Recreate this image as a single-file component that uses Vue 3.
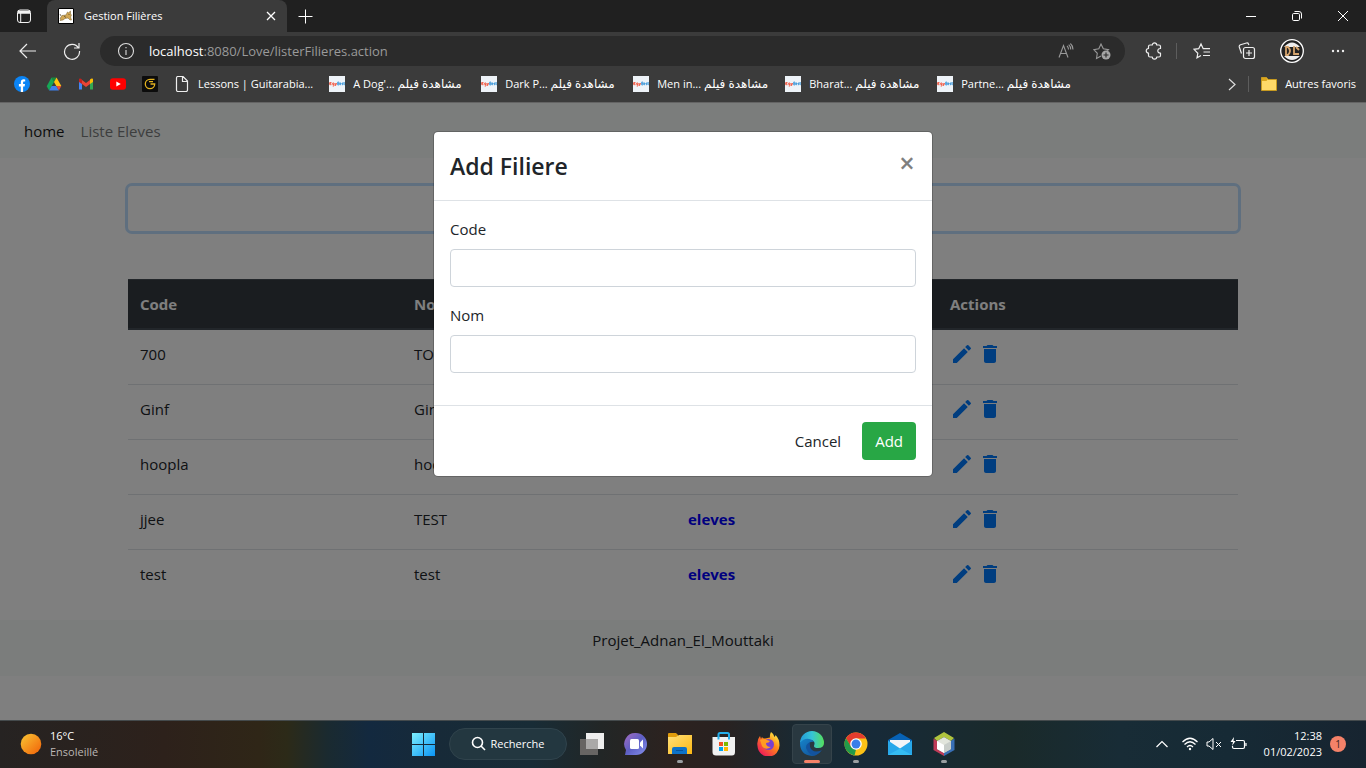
<script setup>
import { ref } from 'vue'

const code = ref('')
const nom = ref('')
const search = ref('')

const filieres = [
  { code: '700', nom: 'TOTO' },
  { code: 'Ginf', nom: 'Ginf' },
  { code: 'hoopla', nom: 'hoopla' },
  { code: 'jjee', nom: 'TEST' },
  { code: 'test', nom: 'test' },
]

const films = ["A Dog'...", 'Dark P...', 'Men in...', 'Bharat...', 'Partne...']
</script>

<template>
  <div class="screen">
    <header class="tabs">
      <button class="tab-menu" aria-label="Onglets">
        <svg width="16" height="16" viewBox="0 0 16 16" fill="none" stroke="#f2f2f2"><rect x="1.5" y="2" width="13" height="12.5" rx="2.5" /><path d="M2 3.5h12M2 5h12" stroke-width="1.6" /><path d="M4.7 5v9" /></svg>
      </button>
      <div class="tab">
        <svg width="16" height="16" viewBox="0 0 16 16"><path fill="#fff" stroke="#000" d="M.5.5h15v15H.5z" /><path d="M2 10.500l2-3 4-.5 1.500-3 1 .8L12.500 3v3l1 1-1 2 1 3h-1.500l-2-2-3 .5-2 1.500-3 .5 1-1.500z" fill="#d1a754" stroke="#715826" stroke-width=".5" /><path d="M2 6l1 2M6 8l2 1.500M10.500 6.500h1" stroke="#4b3d20" stroke-width=".7" /></svg>
        <span class="tab-title">Gestion Filières</span>
        <button aria-label="Fermer l'onglet"><svg width="10" height="10" viewBox="0 0 10 10" stroke="#fff" stroke-width="1.3"><path d="M1 1l8 8M9 1L1 9" /></svg></button>
      </div>
      <button class="tab-new" aria-label="Nouvel onglet"><svg width="15" height="15" viewBox="0 0 15 15" stroke="#fff"><path d="M7.5.5v14M.5 7.5h14" /></svg></button>
      <div class="window-controls">
        <button aria-label="Réduire"><svg width="10" height="10" viewBox="0 0 10 10" stroke="#fff"><path d="M0 5.5h10" /></svg></button>
        <button aria-label="Restaurer"><svg width="10" height="10" viewBox="0 0 10 10" fill="none" stroke="#fff"><rect x=".5" y="2.5" width="7" height="7" rx="1.2" /><path d="M2.5.5H7A2.5 2.5 0 0 1 9.500 3v4.500" /></svg></button>
        <button aria-label="Fermer"><svg width="10" height="10" viewBox="0 0 10 10" stroke="#fff"><path d="M0 0l10 10M10 0L0 10" /></svg></button>
      </div>
    </header>

    <div class="toolbar">
      <button class="nav-btn" aria-label="Retour"><svg width="18" height="16" viewBox="0 0 18 16" fill="none" stroke="#eee" stroke-width="1.2"><path d="M17 8H1.500M8 1L1 8l7 7" /></svg></button>
      <button class="nav-btn" aria-label="Actualiser"><svg width="18" height="18" viewBox="0 0 18 18" fill="none" stroke="#eee" stroke-width="1.2"><path d="M15.500 6A7.500 7.500 0 1 0 16.500 9M16 1v5h-5" /></svg></button>
      <div class="address">
        <svg width="18" height="18" viewBox="0 0 18 18" fill="none" stroke="#ddd" stroke-width="1.100"><circle cx="9" cy="9" r="7.500" /><path d="M9 8v5M9 5v1.300" /></svg>
        <span class="url"><b>localhost</b>:8080/Love/listerFilieres.action</span>
        <button aria-label="Lecture à voix haute"><svg width="18" height="18" viewBox="0 0 18 18" fill="none" stroke="#999" stroke-width="1.100"><path d="M2 15.500L6.500 3.500l4.500 12M3.600 11.500h6M10 4q1.500 1.200 1.500 3.500M11.700 2.700q2 1.800 2 4.800M13.400 1.500q2.600 2.300 2.600 6" /></svg></button>
        <button aria-label="Ajouter aux favoris"><svg width="18" height="18" viewBox="0 0 18 18" fill="none" stroke="#999" stroke-width="1.100"><path d="M8 14l-4.500 2.500.8-5.200L.8 7.600l5-.8L8 2l2.300 4.800 5.200.8-2 2" /><circle cx="13" cy="13" r="4.500" fill="#a5a5a5" stroke="none" /><path d="M13 10.500v5M10.500 13h5" stroke="#2b2b2b" /></svg></button>
      </div>
      <div class="tools">
        <button aria-label="Extensions"><svg width="18" height="18" viewBox="0 0 18 18" fill="none" stroke="#eee" stroke-width="1.200" stroke-linejoin="round"><path d="M5 3h2.300c0-2.800 4.400-2.800 4.400 0H14q1.500 0 1.500 1.500v2c-3.600-.4-3.600 5 0 4.600v2.400q0 1.500-1.500 1.500h-2.300c0 2.800-4.400 2.800-4.400 0H5q-1.500 0-1.500-1.500v-2.400c-3-.2-3-4.400 0-4.600v-2Q3.500 3 5 3z" /></svg></button>
        <i class="sep"></i>
        <button aria-label="Favoris"><svg width="18" height="18" viewBox="0 0 18 18" fill="none" stroke="#eee" stroke-width="1.200"><path d="M8 13.500l-4 2.300.8-4.500L1 7.300l4.700-.6L8 2l2.200 4.700H17M10.500 10H17M10 13.500h7" /></svg></button>
        <button aria-label="Collections"><svg width="18" height="18" viewBox="0 0 18 18" fill="none" stroke="#eee" stroke-width="1.200"><rect x="5.500" y="5.500" width="11" height="11" rx="2" /><path d="M11 8v6M8 11h6M3.500 11.500L1.300 5q-.4-1.700 1.200-2.300L8.500 1q1.500-.4 2 1l.4 1" /></svg></button>
        <button aria-label="Profil"><svg width="24" height="24" viewBox="0 0 24 24"><circle cx="12" cy="12" r="11.300" fill="#222" stroke="#fff" stroke-width="1.300" /><path d="M4 8Q12-1 20 8zM4 17q8 8 16 0z" fill="#eee" /><path d="M6 8h2q4 4 0 8H6zM14 7v8h5M16 8l3 3" fill="none" stroke="#d5a46d" stroke-width="1.800" /></svg></button>
        <button class="more" aria-label="Paramètres"><svg width="14" height="4" viewBox="0 0 14 4" fill="#eee"><circle cx="2" cy="2" r="1.200" /><circle cx="7" cy="2" r="1.200" /><circle cx="12" cy="2" r="1.200" /></svg></button>
      </div>
    </div>

    <nav class="bookmarks" aria-label="Favoris">
      <a href="#" aria-label="Facebook"><svg width="16" height="16" viewBox="0 0 16 16"><circle cx="8" cy="8" r="8" fill="#0b84f5" /><path d="M6.800 16v-5.500H4.900V8.100h1.900V6.500c0-2.200 1.100-3.200 3-3.200l1.400.1v2h-1c-.9 0-1.100.4-1.100 1.200v1.500H11l-.4 2.400H9.100V16z" fill="#fff" /></svg></a>
      <a href="#" aria-label="Drive"><svg width="16" height="16" viewBox="0 0 16 16"><path d="M5.500 1.500h5L8 6z" fill="#168b3c" /><path d="M5.500 1.500L.7 10.200l2.400 4.300L8 6z" fill="#16a756" /><path d="M10.500 1.500L15.300 10h-5L8 6z" fill="#ffc414" /><path d="M5.600 10h4.700l2.600 4.500H3.100z" fill="#3d80ee" /><path d="M10.300 10h5l-2.400 4.500z" fill="#e44c3d" /></svg></a>
      <a href="#" aria-label="Gmail"><svg width="16" height="16" viewBox="0 0 16 16"><path d="M1 4v9.500h3V7z" fill="#4285f4" /><path d="M12 7v6.500h3V4z" fill="#34a853" /><path d="M4 4l4 3 4-3v4l-4 3-4-3z" fill="#ea4335" /><path d="M1 5V3.500C1 2.500 2.500 2 4 3.500V8L1 6z" fill="#c5221f" /><path d="M15 5V3.500C15 2.500 13.500 2 12 3.500V8l3-2z" fill="#fbbc04" /></svg></a>
      <a href="#" aria-label="YouTube"><svg width="16" height="16" viewBox="0 0 16 16"><rect y="2.300" width="16" height="11.400" rx="3" fill="#f00" /><path d="M6.300 5.500v5L10.800 8z" fill="#fff" /></svg></a>
      <a href="#" aria-label="Guitare"><svg width="16" height="16" viewBox="0 0 16 16"><rect width="16" height="16" rx="1" fill="#0c0c0c" /><path d="M12.500 3.300H8A4.700 4.700 0 1 0 12.700 8H8.500M7 5.700h4" fill="none" stroke="#e4b31f" stroke-width="1.300" /></svg></a>
      <a href="#"><svg width="16" height="16" viewBox="0 0 16 16" fill="none" stroke="#eee" stroke-width="1.200"><path d="M2.500 2q0-1.500 1.500-1.500h5l4.500 4.500v9q0 1.500-1.500 1.500H4q-1.500 0-1.500-1.500zM8.500.5V5.500h5" /></svg><span>Lessons | Guitarabia...</span></a>
      <a v-for="film in films" :key="film" href="#" class="film">
        <svg width="16" height="16" viewBox="0 0 16 16"><path fill="#eef3f8" d="M0 0h16v16H0z" /><path d="M2.500 8.700H.7V6.500h1.800M.7 7.600h1.500M3.700 7h1.300v3H3.700M3.700 7v1.500H5M6 7l.8 2M7.600 7L6.400 10" fill="none" stroke="#f1543c" stroke-width=".9" /><path d="M8.700 6v3h1.200V6zM8.700 7.500h1M12 8.700h-1.200V7H12v.8h-1M14 7h-1v.8h1v.9h-1.200M15 6v2.700h.8M14.500 7h1.300" fill="none" stroke="#2f8fd6" stroke-width=".8" /></svg>
        <span>{{ film }} <bdi lang="ar" class="ar">مشاهدة فيلم</bdi></span>
      </a>
      <div class="bookmarks-end">
        <button aria-label="Plus de favoris"><svg width="8" height="13" viewBox="0 0 8 13" fill="none" stroke="#ddd" stroke-width="1.200"><path d="M1 1l6 5.500L1 12" /></svg></button>
        <i class="sep"></i>
        <a href="#"><svg width="16" height="16" viewBox="0 0 16 16"><path d="M.5 1.500h5l1.500 2h8.500v11H.5z" fill="#ffd968" stroke="#c79a20" /><path d="M1 2h4.500L6.500 3.500 5.500 5H1z" fill="#dba51c" /></svg><span>Autres favoris</span></a>
      </div>
    </nav>

    <main class="page">
      <nav class="navbar">
        <a href="#" class="active">home</a>
        <a href="#">Liste Eleves</a>
      </nav>
      <div class="container">
        <input v-model="search" class="search" type="text" aria-label="Recherche" />
        <table>
          <thead>
            <tr><th class="c-code">Code</th><th class="c-nom">Nom</th><th class="c-eleves">Eleves</th><th>Actions</th></tr>
          </thead>
          <tbody>
            <tr v-for="f in filieres" :key="f.code">
              <td>{{ f.code }}</td>
              <td>{{ f.nom }}</td>
              <td><a href="#" class="eleves">eleves</a></td>
              <td>
                <div class="actions">
                  <a href="#" aria-label="Modifier"><svg width="24" height="24" viewBox="0 0 24 24" fill="#007bff"><path d="M3 17.250V21h3.750L17.810 9.940l-3.750-3.750L3 17.250zM20.710 7.040a1 1 0 0 0 0-1.410l-2.340-2.340a1 1 0 0 0-1.410 0l-1.830 1.830 3.750 3.750 1.830-1.830z" /></svg></a>
                  <a href="#" aria-label="Supprimer"><svg width="24" height="24" viewBox="0 0 24 24" fill="#007bff"><path d="M6 19c0 1.100.9 2 2 2h8c1.100 0 2-.9 2-2V7H6v12zM19 4h-3.500l-1-1h-5l-1 1H5v2h14V4z" /></svg></a>
                </div>
              </td>
            </tr>
          </tbody>
        </table>
      </div>
      <footer class="footer">Projet_Adnan_El_Mouttaki</footer>

      <div class="backdrop">
        <form class="modal" role="dialog" aria-labelledby="modal-title" @submit.prevent>
          <div class="modal-header">
            <h4 id="modal-title">Add Filiere</h4>
            <button type="button" class="close" aria-label="Close">×</button>
          </div>
          <div class="modal-body">
            <label for="code">Code</label>
            <input id="code" v-model="code" type="text" />
            <label for="nom">Nom</label>
            <input id="nom" v-model="nom" type="text" />
          </div>
          <div class="modal-footer">
            <button type="button" class="btn">Cancel</button>
            <button type="submit" class="btn btn-add">Add</button>
          </div>
        </form>
      </div>
    </main>

    <footer class="taskbar">
      <div class="weather">
        <svg width="22" height="22" viewBox="0 0 22 22"><defs><linearGradient id="sun" x1="0" y1="0" x2="1" y2="1"><stop offset=".1" stop-color="#f9bd30" /><stop offset=".9" stop-color="#f26a0c" /></linearGradient></defs><circle cx="11" cy="11" r="10.300" fill="url(#sun)" /></svg>
        <div><div>16°C</div><div class="muted">Ensoleillé</div></div>
      </div>
      <div class="apps">
        <button aria-label="Démarrer"><svg width="24" height="24" viewBox="0 0 24 24"><defs><linearGradient id="win" x1="0" y1="0" x2="1" y2="1"><stop stop-color="#7df0ff" /><stop offset="1" stop-color="#0a94f4" /></linearGradient></defs><path fill="url(#win)" d="M1 1h11v11H1zM13 1h11v11H13zM1 13h11v11H1zM13 13h11v11H13z" /></svg></button>
        <button class="find"><svg width="16" height="16" viewBox="0 0 16 16" fill="none" stroke="#fff" stroke-width="1.600"><circle cx="6.500" cy="6.500" r="5" /><path d="M10 10l4 4" /></svg><span>Recherche</span></button>
        <button aria-label="Vue des tâches"><svg width="24" height="24" viewBox="0 0 24 24"><path d="M6 1h18v16H6z" fill="#eee" /><path d="M0 7h18v16H0z" fill="#676563" /><path d="M6 7h12v10H6z" fill="#aaa9a8" /></svg></button>
        <button aria-label="Conversation"><svg width="24" height="24" viewBox="0 0 24 24"><defs><linearGradient id="chat" x1="0" y1="0" x2="1" y2="1"><stop stop-color="#a56cc1" /><stop offset=".5" stop-color="#5d5fc4" /><stop offset="1" stop-color="#8792ee" /></linearGradient></defs><path d="M12 1a11 11 0 1 1 0 22H1l1-5A11 11 0 0 1 12 1z" fill="url(#chat)" /><rect x="6" y="7" width="9" height="10" rx="1.500" fill="#fff" /><path d="M16 10.500L19 7.500v9l-3-3z" fill="#fff" /></svg></button>
        <button class="open" aria-label="Explorateur"><svg width="24" height="24" viewBox="0 0 24 24"><defs><linearGradient id="fold" x1="0" y1="0" x2="1" y2="1"><stop stop-color="#ffe07a" /><stop offset="1" stop-color="#fdb813" /></linearGradient></defs><path d="M0 2q0-1 1-1h7l2 2v3H0z" fill="#e09c0c" /><path d="M0 5h8l3-2h13v19H0z" fill="url(#fold)" /><path d="M4 22v-5q0-2 2-2h11q2 0 2 2v5z" fill="#0d72c8" /><path d="M8 18.500h7" stroke="#06529c" /></svg></button>
        <button aria-label="Microsoft Store"><svg width="24" height="24" viewBox="0 0 24 24"><path d="M6.500 8V2.500Q6.500 1 8 1h7.500Q17 1 17 2.500V8" fill="none" stroke="#25aeea" stroke-width="2" /><path d="M.5 5h22.500v15q0 3.500-3 3.500H4Q.5 23.500.5 20z" fill="#f1f1f1" /><path d="M6.500 4.500v3M17 4.500v3" stroke="#25aeea" stroke-width="2" /><path d="M7 10h4v4H7z" fill="#f25022" /><path d="M12 10h4v4h-4z" fill="#7fba00" /><path d="M7 15h4v4H7z" fill="#00a4ef" /><path d="M12 15h4v4h-4z" fill="#ffb900" /></svg></button>
        <button aria-label="Firefox"><svg width="24" height="24" viewBox="0 0 24 24"><defs><linearGradient id="fox" x1="1" y1="0" x2=".2" y2="1"><stop offset=".1" stop-color="#fff04a" /><stop offset=".45" stop-color="#ff8b16" /><stop offset="1" stop-color="#ed125f" /></linearGradient></defs><path d="M15 0q3 2 3.500 5 1-1 1-2 4 4 4 10a11 11 0 0 1-22 1Q.5 8 4 4l1 3 1-2q1 1.500 3 1.500l5-1Q13.500 2.500 15 0z" fill="url(#fox)" /><circle cx="12.500" cy="12.500" r="5.500" fill="#7840cf" /><path d="M4 8q4-2 7 0l3 1q-1 2-4 2 0 4 5 4-6 4-9-1" fill="#ff9b21" /></svg></button>
        <button class="current" aria-label="Edge"><svg width="26" height="26" viewBox="0 0 26 26"><defs><linearGradient id="eg1" x1="0" y1="0" x2="1" y2="0"><stop stop-color="#2399d8" /><stop offset=".5" stop-color="#36c4d6" /><stop offset="1" stop-color="#55df5c" /></linearGradient><linearGradient id="eg2" x1="0" y1="0" x2="1" y2="1"><stop stop-color="#1683c9" /><stop offset="1" stop-color="#124d93" /></linearGradient></defs><path d="M1 12A12 12 0 0 1 25 12q0 5-6 5-4 0-4-2 2-5-3-6-6-1-11 3z" fill="url(#eg1)" /><path d="M1 12q4-5 9-4 4 .5 5 3-5-1-6 4 0 6 7 6 4 0 6-1-4 5-9 5-12-1-12-13z" fill="url(#eg2)" /><path d="M11 11q-6 3-3 8 3 6 8 5 4-1 7-5-6 3-10 0-3-3-2-8z" fill="#13539e" /></svg></button>
        <button class="open" aria-label="Chrome"><svg width="24" height="24" viewBox="0 0 24 24"><circle cx="12" cy="12" r="11.500" fill="#fbc116" /><path d="M2 6.200A11.500 11.500 0 0 1 22 6.500H12L7 15z" fill="#e33b2e" /><path d="M2 6.200L7.200 15 12 17.500 10.500 23.400A11.500 11.500 0 0 1 2 6.200z" fill="#229a4a" /><circle cx="12" cy="12" r="5.800" fill="#fff" /><circle cx="12" cy="12" r="4.500" fill="#397ee9" /></svg></button>
        <button aria-label="Courrier"><svg width="24" height="24" viewBox="0 0 24 24"><path d="M0 8L12 1l12 7v15H0z" fill="#0762b5" /><path d="M2 8h20v9H2z" fill="#f3f5f8" /><path d="M0 8.500l12 8 12-8V23H0z" fill="#28a8ea" /><path d="M12 16.500L24 23H0z" fill="#35bdf3" /></svg></button>
        <button class="open" aria-label="NetBeans"><svg width="24" height="24" viewBox="0 0 24 24"><path d="M12 0l10 6-3 3-7-4-7 4-3-3z" fill="#b0c43e" /><path d="M1.500 6.500L5 9v8l7 4v3L1.500 18z" fill="#bf3b58" /><path d="M22.500 6.500L19 9v8l-7 4v3l10.500-6z" fill="#386fb6" /><path d="M12 5l7 4v8l-7 4-7-4V9z" fill="#e2e5dc" /><path d="M5 9l7 4v8l-7-4z" fill="#fff" /><path d="M12 13l7-4v8l-7 4z" fill="#c8cdc9" /></svg></button>
      </div>
      <div class="tray">
        <button aria-label="Icônes cachées"><svg width="12" height="8" viewBox="0 0 12 8" fill="none" stroke="#fff" stroke-width="1.200"><path d="M.5 7L6 1.500 11.500 7" /></svg></button>
        <svg class="wifi" width="16" height="14" viewBox="0 0 16 14" fill="none" stroke="#fff" stroke-width="1.200"><path d="M.5 5Q8-2.500 15.500 5M2.500 7.500Q8 2 13.500 7.500M5 10q3-3 6 0" /><circle cx="8" cy="12" r="1.200" fill="#fff" stroke="none" /></svg>
        <svg width="16" height="14" viewBox="0 0 16 14" fill="none" stroke="#fff"><path d="M1 5v4h2l4 3.500v-11L3 5zM10 5l5 5M15 5l-5 5" /></svg>
        <svg width="17" height="14" viewBox="0 0 17 14" fill="none" stroke="#fff"><path d="M6 3.500h7q1.500 0 1.500 1.500v5q0 1.500-1.500 1.500H4q-1.500 0-1.500-1.500V9M16 6v3" stroke-width="1.200" /><path d="M4 0L.5 5H3L2 9l3.500-5H3.500z" fill="#fff" stroke="none" /></svg>
        <div class="clock"><div>12:38</div><div>01/02/2023</div></div>
        <span class="badge">1</span>
      </div>
    </footer>
  </div>
</template>

<style>
body {
  margin: 0;
  overflow: hidden;
}
</style>

<style scoped>
.screen {
  display: flex;
  flex-direction: column;
  height: 100vh;
  color: #fff;
  font: 11px/16px "Open Sans", "Noto Sans", "DejaVu Sans", sans-serif;
}
.screen *,
.screen *::after {
  box-sizing: border-box;
}
button {
  display: flex;
  align-items: center;
  justify-content: center;
  padding: 0;
  border: 0;
  background: none;
  color: inherit;
  font: inherit;
}
a {
  color: inherit;
  text-decoration: none;
}
svg {
  display: block;
  flex: none;
}
.sep {
  width: 1px;
  height: 16px;
  background: #5d5d5d;
}
.tabs {
  display: flex;
  flex: none;
  height: 32px;
  background: #202020;
}
.tab-menu {
  width: 47px;
}
.tab {
  display: flex;
  align-items: center;
  gap: 10px;
  width: 240px;
  padding: 0 11px;
  border-radius: 8px 8px 0 0;
  background: #3b3b3b;
}
.tab-title {
  flex: 1;
}
.tab-new {
  width: 36px;
}
.window-controls {
  display: flex;
  margin-left: auto;
}
.window-controls button {
  width: 46px;
}
.toolbar {
  display: flex;
  align-items: center;
  flex: none;
  height: 38px;
  padding: 0 4px 0 6px;
  background: #3b3b3b;
}
.nav-btn {
  width: 44px;
  height: 30px;
}
.address {
  display: flex;
  align-items: center;
  gap: 14px;
  flex: 1;
  height: 30px;
  margin-left: 6px;
  padding: 0 12px 0 17px;
  border-radius: 15px;
  background: #2b2b2b;
}
.address button {
  width: 22px;
}
.url {
  flex: 1;
  color: #9a9a9a;
  font-size: 13px;
}
.url b {
  color: #fff;
  font-weight: 400;
}
.tools {
  display: flex;
  align-items: center;
  padding-left: 6px;
}
.tools button {
  width: 45px;
  height: 30px;
}
.tools .more {
  width: 48px;
}
.tools .sep {
  margin-right: 2px;
}
.bookmarks {
  display: flex;
  align-items: center;
  gap: 16px;
  flex: none;
  height: 32px;
  padding: 0 10px 4px 14px;
  background: #3b3b3b;
  white-space: nowrap;
}
.bookmarks a {
  display: flex;
  align-items: center;
  gap: 8px;
}
.bookmarks .film {
  width: 136px;
}
.ar {
  font-size: 12px;
}
.bookmarks-end {
  display: flex;
  align-items: center;
  gap: 12px;
  margin-left: auto;
}
.page {
  position: relative;
  flex: 1;
  min-height: 0;
  border-top: 1px solid #c8c8c8;
  background: #fff;
  color: #212529;
  font-size: 15px;
  line-height: 24px;
}
.navbar {
  display: flex;
  align-items: center;
  gap: 16px;
  height: 55px;
  padding: 0 24px;
  background: #f6faf8;
  color: #7b7d7d;
}
.navbar .active {
  color: #1a1a1a;
}
.container {
  max-width: 1110px;
  margin: 0 auto;
  padding-top: 28px;
}
.search {
  display: block;
  width: 100%;
  height: 45px;
  margin-bottom: 48px;
  padding: 0 12px;
  border: 0;
  border-radius: 4px;
  outline: none;
  box-shadow: 0 0 0 3px #bfdeff;
  font: inherit;
}
table {
  width: 100%;
  border-collapse: separate;
  border-spacing: 0;
  table-layout: fixed;
}
.c-code,
.c-nom {
  width: 274px;
}
.c-eleves {
  width: 262px;
}
th {
  padding: 12px;
  border-top: 1px solid #454d55;
  border-bottom: 2px solid #454d55;
  background: #343a40;
  color: #fff;
  text-align: left;
}
td {
  height: 55px;
  padding: 12px;
  border-bottom: 1px solid #dee2e6;
  vertical-align: top;
}
tbody tr:last-child td {
  border-bottom: 0;
}
.eleves {
  color: #00f;
  font-weight: 700;
}
.actions {
  display: flex;
  gap: 4px;
}
.footer {
  height: 56px;
  margin-top: 15px;
  padding: 8px;
  background: #f6faf8;
  text-align: center;
}
.backdrop {
  position: absolute;
  inset: -1px 0 0;
  padding-top: 29px;
  background: rgba(0, 0, 0, 0.5);
}
.modal {
  width: 500px;
  margin: 0 auto;
  border: 1px solid rgba(0, 0, 0, 0.2);
  border-radius: 5px;
  background: #fff;
  background-clip: padding-box;
}
.modal-header {
  display: flex;
  justify-content: space-between;
  align-items: flex-start;
  padding: 16px;
  border-bottom: 1px solid #dee2e6;
}
.modal-header h4 {
  margin: 0;
  font-size: 23px;
  font-weight: 600;
  line-height: 36px;
}
.close {
  width: 18px;
  height: 30px;
  color: #7f7f7f;
  font-size: 27px;
  font-weight: 600;
}
.modal-body {
  padding: 16px;
}
.modal-body label {
  display: block;
  margin-bottom: 8px;
}
.modal-body input {
  display: block;
  width: 100%;
  height: 38px;
  margin-bottom: 16px;
  padding: 6px 12px;
  border: 1px solid #ced4da;
  border-radius: 4px;
  font: inherit;
}
.modal-footer {
  display: flex;
  justify-content: flex-end;
  gap: 8px;
  padding: 16px;
  border-top: 1px solid #dee2e6;
}
.btn {
  height: 38px;
  padding: 0 13px;
  border-radius: 4px;
}
.btn-add {
  background: #28a745;
  color: #fff;
}
.taskbar {
  display: grid;
  grid-template-columns: 1fr auto 1fr;
  align-items: center;
  flex: none;
  height: 48px;
  box-shadow: inset 0 1px #444a4c;
  background: linear-gradient(90deg, #262322 0%, #2d211b 12%, #2f2617 19%, #2c2a18 21%, #1a2a30 24%, #13293f 27%, #172a38 32%, #182c36 39%, #222626 44%, #2c221f 49%, #292221 53%, #182a34 59%, #172a38 64%, #1a2a2a 74%, #182c36 82%, #162a35 90%, #172430 100%);
}
.weather {
  display: flex;
  align-items: center;
  gap: 8px;
  padding-left: 20px;
}
.muted {
  color: #bbb7b4;
}
.apps {
  display: flex;
  align-items: center;
  gap: 4px;
}
.apps button {
  position: relative;
  width: 40px;
  height: 40px;
  border-radius: 4px;
}
.apps .find {
  gap: 4px;
  width: 118px;
  height: 32px;
  margin: 0 1px 0 2px;
  border: 1px solid #30434c;
  border-radius: 16px;
  background: #233740;
}
.apps .current {
  border: 1px solid #35434a;
  background: #293840;
}
.open::after,
.current::after {
  content: "";
  position: absolute;
  bottom: 1px;
  width: 6px;
  height: 3px;
  border-radius: 2px;
  background: #9a9fa2;
}
.current::after {
  bottom: 0;
  width: 16px;
  background: #f58269;
}
.tray {
  display: flex;
  align-items: center;
  justify-content: flex-end;
  gap: 8px;
  padding-right: 20px;
}
.wifi {
  margin-left: 6px;
}
.clock {
  margin-left: 9px;
  text-align: right;
}
.badge {
  width: 16px;
  border-radius: 8px;
  background: #f58269;
  color: #3b2520;
  font-size: 10px;
  text-align: center;
}
</style>
